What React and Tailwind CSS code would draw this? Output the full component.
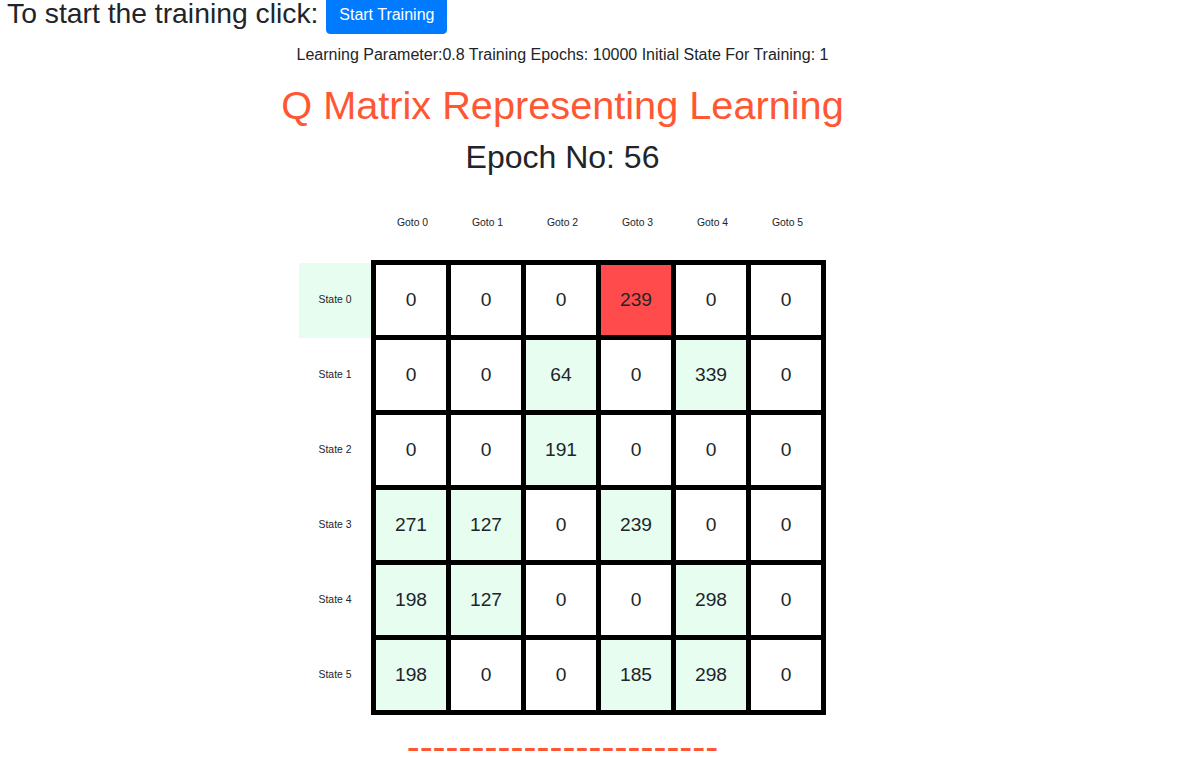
import React from "react";

const rows = [
  [0, 0, 0, 239, 0, 0],
  [0, 0, 64, 0, 339, 0],
  [0, 0, 191, 0, 0, 0],
  [271, 127, 0, 239, 0, 0],
  [198, 127, 0, 0, 298, 0],
  [198, 0, 0, 185, 298, 0],
];

export default function App() {
  return (
    <div
      className="-mt-[4px] text-[#212529] bg-white h-[766px] overflow-hidden"
      style={{ fontFamily: '"Liberation Sans", Arial, sans-serif' }}
    >
      <h3 className="text-[28.3px] leading-[1.2] pl-[7px] mb-[9px] font-normal">
        To start the training click:{" "}
        <button className="inline-block align-[3px] bg-[#007bff] border border-[#007bff] text-white text-[16px] leading-[1.5] px-3 py-[6px] rounded-[4px]">
          Start Training
        </button>
      </h3>
      <div className="w-[1125px] flex flex-col items-center">
        <div className="text-[16px] leading-[24px]">
          Learning Parameter:0.8 Training Epochs: 10000 Initial State For Training: 1
        </div>
        <h1 className="text-[39.7px] leading-[1.2] text-[#ff5733] mt-[15px]">Q Matrix Representing Learning</h1>
        <h2 className="text-[32px] leading-[1.2] mt-[8px] mb-[9px]">Epoch No: 56</h2>
        <div className="flex flex-col">
          <div className="flex h-[75px] items-center text-[10.4px]">
            <div className="w-[76px]" />
            {[0, 1, 2, 3, 4, 5].map((i) => (
              <div key={i} className="w-[75px] text-center">
                Goto {i}
              </div>
            ))}
          </div>
          <div className="flex items-center">
            <div className="flex flex-col w-[72px]">
              {[0, 1, 2, 3, 4, 5].map((i) => (
                <div
                  key={i}
                  className={
                    "h-[75px] flex items-center justify-center text-[10.4px] " +
                    (i === 0 ? "bg-[#e6fdf0]" : "")
                  }
                >
                  State {i}
                </div>
              ))}
            </div>
            <div className="bg-black p-[5px] grid grid-cols-6 gap-[5px]">
              {rows.map((r, ri) =>
                r.map((v, ci) => {
                  const red = ri === 0 && ci === 3;
                  const bg = red ? "bg-[#ff4b4b]" : v !== 0 ? "bg-[#e6fdf0]" : "bg-white";
                  return (
                    <div
                      key={ri + "-" + ci}
                      className={"w-[70px] h-[70px] flex items-center justify-center text-[19.2px] " + bg}
                    >
                      {v}
                    </div>
                  );
                })
              )}
            </div>
          </div>
        </div>
        <div className="text-[39px] leading-[1.2] text-[#ff5733] mt-[9px]">------------------------</div>
      </div>
    </div>
  );
}
